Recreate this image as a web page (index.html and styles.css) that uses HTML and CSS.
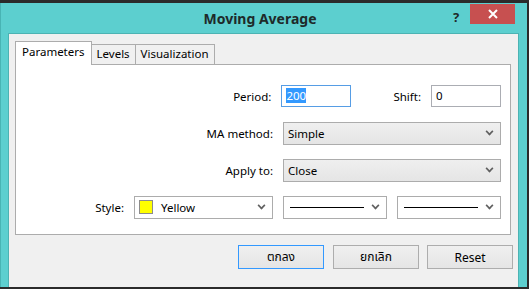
FILE: index.html
```html
<!DOCTYPE html>
<html>
<head>
  <title>Moving Average</title>
  <link rel="stylesheet" href="styles.css">
</head>
<body>
  <div class="window">
    <div class="titlebar">
      <span class="title">Moving Average</span>
      <span class="help">?</span>
      <span class="close">
        <svg width="10" height="10" viewBox="0 0 10 10"><path d="M1 1 L9 9 M9 1 L1 9" stroke="#fff" stroke-width="2"/></svg>
      </span>
    </div>
    <div class="client">
      <div class="tabs">
        <div class="tab active">Parameters</div>
        <div class="tab">Levels</div>
        <div class="tab">Visualization</div>
      </div>
      <div class="panel">
        <div class="row">
          <label class="lbl">Period:</label>
          <div class="input focus"><span class="sel">200</span></div>
          <label class="lbl shift">Shift:</label>
          <div class="input">0</div>
        </div>
        <div class="row">
          <label class="lbl">MA method:</label>
          <div class="select wide"><span>Simple</span><i class="chev"></i></div>
        </div>
        <div class="row">
          <label class="lbl">Apply to:</label>
          <div class="select wide"><span>Close</span><i class="chev"></i></div>
        </div>
        <div class="row">
          <label class="lbl">Style:</label>
          <div class="select white color"><b class="swatch"></b><span>Yellow</span><i class="chev"></i></div>
          <div class="select white line"><b class="stroke"></b><i class="chev"></i></div>
          <div class="select white line"><b class="stroke"></b><i class="chev"></i></div>
        </div>
      </div>
      <div class="buttons">
        <button class="btn default">ตกลง</button>
        <button class="btn">ยกเลิก</button>
        <button class="btn">Reset</button>
      </div>
    </div>
  </div>
</body>
</html>
```

FILE: styles.css
```css
body {
  margin: 0;
  background-color: #2b2b2b;
  font-family: "Noto Sans", "Noto Sans Thai", sans-serif;
  font-size: 11.5px;
  color: #000;
}

.window {
  margin-top: 3px;
  width: 526px;
  height: 284px;
  background-color: #5ccfcf;
  border-left: 1px solid #48b4b4;
}

.titlebar {
  height: 30px;
  position: relative;
}

.title {
  position: absolute;
  left: 0;
  right: 0;
  top: 6px;
  text-align: center;
  padding-right: 8px;
  font-size: 14px;
  font-weight: bold;
  color: #1e2a2a;
}

.help {
  position: absolute;
  left: 452px;
  top: 5px;
  font-size: 13px;
  font-weight: bold;
  color: #1e2a2a;
}

.close {
  position: absolute;
  left: 469px;
  top: 1px;
  width: 45px;
  height: 20px;
  background-color: #c75050;
  display: flex;
  align-items: center;
  justify-content: center;
}

.client {
  margin-left: 7px;
  width: 509px;
  height: 245px;
  background-color: #f0f0f0;
  border: 1px solid #4cb3b3;
  padding-top: 8px;
  box-sizing: content-box;
}

.tabs {
  display: flex;
  align-items: flex-end;
  margin-left: 6px;
  height: 22px;
}

.tab {
  height: 19px;
  padding: 0 5px;
  line-height: 18px;
  border: 1px solid #acacac;
  border-bottom: none;
  background-color: #f0f0f0;
  margin-left: -1px;
}

.tab:first-child {
  margin-left: 0;
}

.tab.active {
  height: 23px;
  line-height: 20px;
  background-color: #fff;
  padding: 0 6px;
  position: relative;
  z-index: 1;
  margin-bottom: -1px;
}

.panel {
  margin-left: 6px;
  width: 496px;
  height: 171px;
  background-color: #fff;
  border: 1px solid #acacac;
  padding-top: 20px;
  box-sizing: border-box;
  display: flex;
  flex-direction: column;
  gap: 15px;
}

.row {
  display: flex;
  align-items: center;
  justify-content: flex-end;
  padding-right: 9px;
  gap: 10px;
  height: 22px;
}

.lbl {
  text-align: right;
}

.shift {
  margin-left: 32px;
}

.input {
  width: 70px;
  height: 22px;
  box-sizing: border-box;
  border: 1px solid #abadb3;
  background-color: #fff;
  padding-left: 4px;
  line-height: 19px;
}

.input.focus {
  border-color: #569de5;
}

.sel {
  background-color: #3399ff;
  color: #fff;
}

.select {
  height: 23px;
  box-sizing: border-box;
  border: 1px solid #acacac;
  background: linear-gradient(#efefef, #e5e5e5);
  display: flex;
  align-items: center;
  padding-left: 4px;
  position: relative;
}

.select.wide {
  width: 218px;
}

.select.white {
  background: #fff;
}

.select.color {
  width: 139px;
}

.select.line {
  width: 104px;
}

.chev {
  position: absolute;
  right: 7px;
  top: 5px;
  width: 5px;
  height: 5px;
  border-right: 2px solid #606060;
  border-bottom: 2px solid #606060;
  transform: rotate(45deg) scale(0.8, 0.8);
}

.swatch {
  width: 12px;
  height: 12px;
  border: 1px solid #8c8c8c;
  background-color: #ffff00;
  margin-right: 8px;
}

.stroke {
  width: 74px;
  height: 1px;
  background-color: #000;
  margin-left: 2px;
}

.buttons {
  display: flex;
  justify-content: flex-end;
  gap: 8px;
  padding-right: 5px;
  margin-top: 10px;
}

.btn {
  width: 86px;
  height: 24px;
  font-family: "Noto Sans", "Noto Sans Thai", sans-serif;
  font-size: 12px;
  border: 1px solid #adadad;
  background: linear-gradient(#f0f0f0, #e5e5e5);
  padding: 0;
}

.btn.default {
  border-color: #3399ff;
  margin-right: 1px;
}
```
